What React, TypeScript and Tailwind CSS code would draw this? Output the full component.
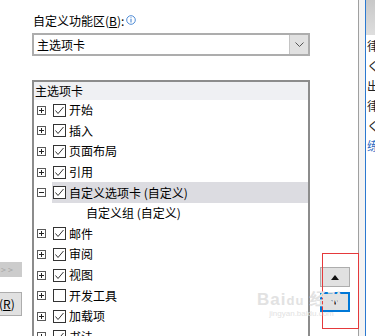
import React from 'react'

const rows = [
  { label: '开始', checked: true, tree: 'plus' },
  { label: '插入', checked: true, tree: 'plus' },
  { label: '页面布局', checked: true, tree: 'plus' },
  { label: '引用', checked: true, tree: 'plus' },
  { label: '自定义选项卡 (自定义)', checked: true, tree: 'minus', selected: true },
  { label: '自定义组 (自定义)', checked: false, tree: 'none', group: true },
  { label: '邮件', checked: true, tree: 'plus' },
  { label: '审阅', checked: true, tree: 'plus' },
  { label: '视图', checked: true, tree: 'plus' },
  { label: '开发工具', checked: false, tree: 'plus' },
  { label: '加载项', checked: true, tree: 'plus' },
  { label: '书法', checked: true, tree: 'plus' },
]

function TreeBox({ minus }: { minus?: boolean }) {
  return (
    <svg width="9" height="9" viewBox="0 0 9 9" className="shrink-0">
      <rect x="0.5" y="0.5" width="8" height="8" fill="white" stroke="#5a5a5a" />
      <line x1="2" y1="4.5" x2="7" y2="4.5" stroke="#222" />
      {!minus && <line x1="4.5" y1="2" x2="4.5" y2="7" stroke="#222" />}
    </svg>
  )
}

function CheckBox({ checked }: { checked: boolean }) {
  return (
    <svg width="13" height="13" viewBox="0 0 13 13" className="shrink-0">
      <rect x="0.5" y="0.5" width="12" height="12" fill="white" stroke="#333" />
      {checked && <path d="M2.5 6.5 L5 9.5 L10.5 3" fill="none" stroke="#333" strokeWidth="1" />}
    </svg>
  )
}

export default function App() {
  return (
    <div className="relative flex w-[375px] h-[336px] overflow-hidden bg-white text-black font-['Microsoft_YaHei','Noto_Sans_CJK_SC',sans-serif] text-[12px]">
      {/* left buttons, cut off */}
      <div className="w-[32px] shrink-0 pt-[262px] flex flex-col gap-[15px]">
        <div className="w-[22px] h-[15px] shrink-0 bg-[#cccccc] flex items-center text-[9px] leading-none text-[#a5a5a5] pl-[1px] tracking-[2px]">&gt;&gt;</div>
        <div className="w-[22px] h-[24px] shrink-0 bg-[#e1e1e1] border border-[#adadad] border-l-0 flex items-center leading-none text-[12px]">
          <span className="-ml-[1px]">(<span className="underline">R</span>)</span>
        </div>
      </div>

      {/* main column */}
      <div className="w-[278px] shrink-0 flex flex-col">
        <div className="h-[33px] shrink-0 flex items-center pt-[9px] pl-[1px] leading-none">
          <span>自定义功能区(<span className="underline">B</span>):</span>
          <svg width="10" height="10" viewBox="0 0 10 10" className="ml-[2px] -mt-[3px]">
            <circle cx="5" cy="5" r="4.3" fill="none" stroke="#3c7fd0" strokeWidth="0.9" />
            <rect x="4.5" y="4" width="1" height="3.5" fill="#3c7fd0" />
            <rect x="4.5" y="2.3" width="1" height="1" fill="#3c7fd0" />
          </svg>
        </div>
        <div className="h-[23px] shrink-0 border-2 border-[#adadad] flex items-center">
          <span className="flex-1 pl-[3px] leading-none">主选项卡</span>
          <div className="w-[19px] h-full bg-[#e1e1e1] border-l border-[#c4c4c4] flex items-center justify-center">
            <svg width="9" height="5" viewBox="0 0 9 5">
              <path d="M0.5 0.5 L4.5 4.5 L8.5 0.5" fill="none" stroke="#555" strokeWidth="1" />
            </svg>
          </div>
        </div>
        <div className="mt-[24px] flex-1 min-h-0 overflow-hidden border-2 border-[#8c8c8c] border-b-0 flex flex-col">
          <div className="h-[18px] shrink-0 bg-[#eff0f3] flex items-center pl-[1px] leading-none">主选项卡</div>
          {rows.map((r) => (
            <div key={r.label} className="h-[20.6px] shrink-0 flex items-center leading-none">
              {r.group ? (
                <span className="pl-[52px]">{r.label}</span>
              ) : (
                <>
                  <div className="w-[18px] pl-[3px] flex items-center">
                    <TreeBox minus={r.tree === 'minus'} />
                  </div>
                  <div className={`flex-1 h-full flex items-center pl-[1px] ${r.selected ? 'bg-[#dcdce1]' : ''}`}>
                    <CheckBox checked={r.checked} />
                    <span className="ml-[3px]">{r.label}</span>
                  </div>
                </>
              )}
            </div>
          ))}
        </div>
      </div>

      {/* move up/down column */}
      <div className="w-[48px] shrink-0 pt-[267px] pl-[10px] flex flex-col gap-[5px]">
        <div className="w-[30px] h-[20px] shrink-0 bg-[#e1e1e1] border border-[#adadad] flex items-center justify-center">
          <svg width="8" height="5" viewBox="0 0 8 5"><path d="M0 5 L4 0 L8 5 Z" fill="#111" /></svg>
        </div>
        <div className="w-[30px] h-[20px] shrink-0 bg-[#e1e1e1] border-2 border-[#0078d7] flex items-center justify-center">
          <svg width="8" height="5" viewBox="0 0 8 5"><path d="M0 0 L4 5 L8 0 Z" fill="#111" /></svg>
        </div>
      </div>

      {/* dialog edge */}
      <div className="w-px shrink-0 bg-[#a0a0a0]" />
      <div className="w-[6px] shrink-0 bg-[#f3f3f3]" />
      <div className="w-px shrink-0 bg-[#2b79d0]" />

      {/* window behind, cut off */}
      <div className="flex-1 flex flex-col overflow-hidden bg-white">
        <div className="h-[35px] shrink-0 bg-gradient-to-b from-[#c8c8c8] to-[#dedede]" />
        <div className="flex flex-col pl-[1px] leading-[20px] text-[12px] text-[#222] whitespace-nowrap pt-[1px]">
          <span>律</span>
          <span>く</span>
          <span>出</span>
          <span>律</span>
          <span>く</span>
          <span className="text-[#2b6cc4]">练</span>
        </div>
      </div>

      {/* red annotation box */}
      <div className="absolute left-[322px] top-[253px] w-[37px] h-[76px] border border-[#e5393b]" />

      {/* watermark */}
      <div className="absolute left-[257px] top-[291px] flex flex-col items-center leading-none text-[#e2e2e2] pointer-events-none">
        <span className="text-[17px] font-['Liberation_Sans',sans-serif] font-bold tracking-[1px]">Bai<span className="text-[13px]">du</span> 经验</span>
        <span className="text-[8px] font-['Liberation_Sans',sans-serif] mt-[2px]">jingyan.baidu.com</span>
      </div>
    </div>
  )
}
